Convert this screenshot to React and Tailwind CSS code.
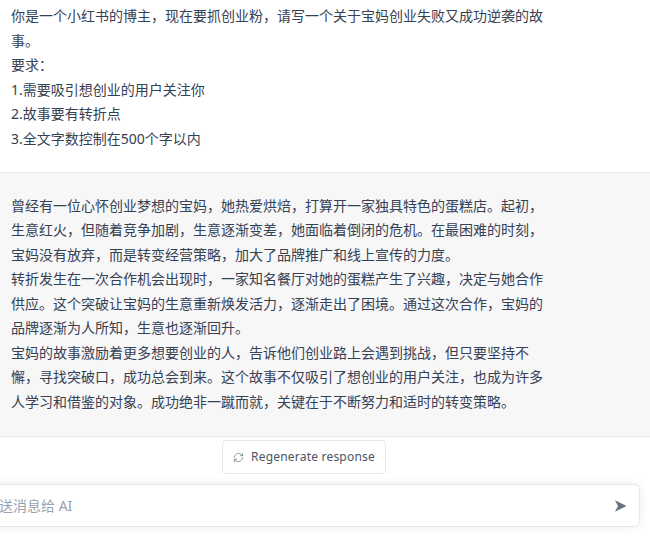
import { RefreshCw } from 'lucide-react';

const FONT = 'font-["Noto_Sans","Noto_Sans_CJK_SC",sans-serif]';

const PROMPT = [
  '你是一个小红书的博主，现在要抓创业粉，请写一个关于宝妈创业失败又成功逆袭的故事。',
  '要求：',
  '1.需要吸引想创业的用户关注你',
  '2.故事要有转折点',
  '3.全文字数控制在500个字以内',
];

const ANSWER = [
  '曾经有一位心怀创业梦想的宝妈，她热爱烘焙，打算开一家独具特色的蛋糕店。起初，生意红火，但随着竞争加剧，生意逐渐变差，她面临着倒闭的危机。在最困难的时刻，宝妈没有放弃，而是转变经营策略，加大了品牌推广和线上宣传的力度。',
  '转折发生在一次合作机会出现时，一家知名餐厅对她的蛋糕产生了兴趣，决定与她合作供应。这个突破让宝妈的生意重新焕发活力，逐渐走出了困境。通过这次合作，宝妈的品牌逐渐为人所知，生意也逐渐回升。',
  '宝妈的故事激励着更多想要创业的人，告诉他们创业路上会遇到挑战，但只要坚持不懈，寻找突破口，成功总会到来。这个故事不仅吸引了想创业的用户关注，也成为许多人学习和借鉴的对象。成功绝非一蹴而就，关键在于不断努力和适时的转变策略。',
];

export default function App() {
  return (
    <div className={`h-[543px] w-[650px] overflow-hidden bg-white text-sm leading-[24.5px] text-gray-700 ${FONT}`}>
      {/* 提问 */}
      <div className="border-b border-gray-200 pt-1 pr-[99px] pb-[21px] pl-[11px]">
        {PROMPT.map((t) => (
          <p key={t}>{t}</p>
        ))}
      </div>

      {/* 回答 */}
      <div className="border-b border-gray-200 bg-[#f7f7f8] pt-[20.5px] pr-[99px] pb-[22px] pl-[11px]">
        {ANSWER.map((t) => (
          <p key={t}>{t}</p>
        ))}
      </div>

      {/* 重新生成 */}
      <div className="flex justify-center pt-[3px] pr-[42px]">
        <button className="flex h-[34px] w-[164px] items-center justify-center gap-[7px] rounded border border-gray-200 bg-white text-xs text-gray-600">
          <RefreshCw size={11} strokeWidth={1.5} className="text-gray-500" />
          <span className="tracking-[0.2px]">Regenerate response</span>
        </button>
      </div>

      {/* 输入框 */}
      <div className="mt-[10px] -ml-[28px] flex h-[43px] w-[668px] items-center justify-between rounded-md border border-gray-200 bg-white pr-[12px] pl-[12px] shadow-[0_0_10px_rgba(0,0,0,0.08)]">
        <span className="text-sm text-gray-400">发送消息给 AI</span>
        <svg width="12" height="12" viewBox="0 0 12 12" className="fill-gray-500">
          <path d="M0 0.3 L11.6 6 L0 11.7 L3 6 Z" />
        </svg>
      </div>
    </div>
  );
}
